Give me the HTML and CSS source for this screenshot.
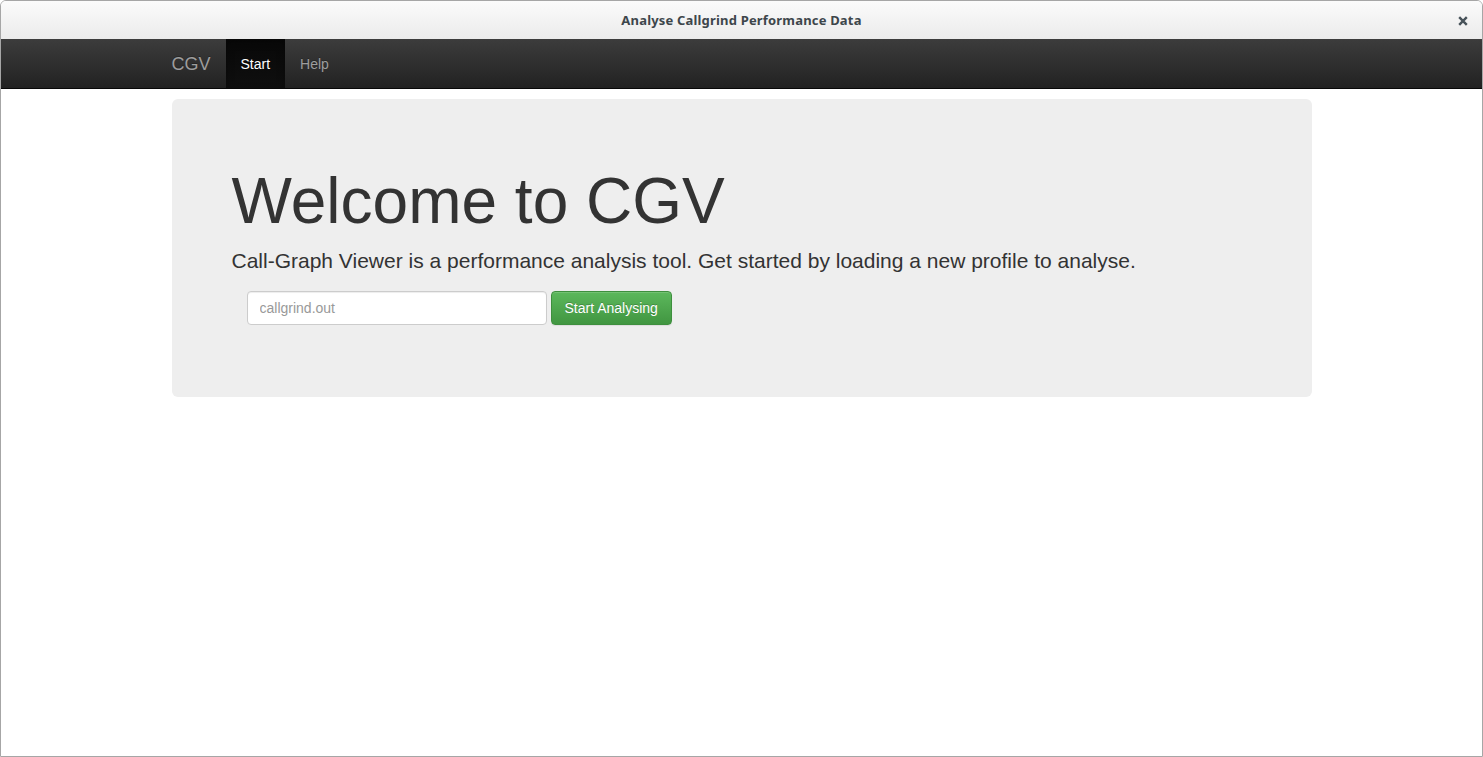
FILE: index.html
```html
<!DOCTYPE html>
<html>
<head>
<meta charset="utf-8">
<title>Analyse Callgrind Performance Data</title>
<link rel="stylesheet" href="styles.css">
</head>
<body>
<div class="window">
  <header class="titlebar">
    <span class="title">Analyse Callgrind Performance Data</span>
    <span class="close">
      <svg width="10" height="10" viewBox="0 0 10 10"><path d="M1.2 1.2 L8.8 8.8 M8.8 1.2 L1.2 8.8" stroke="#48535a" stroke-width="2.4" stroke-linecap="butt"/></svg>
    </span>
  </header>
  <nav class="navbar">
    <div class="container navwrap">
      <a class="brand">CGV</a>
      <ul class="navlinks">
        <li class="active"><a>Start</a></li>
        <li><a>Help</a></li>
      </ul>
    </div>
  </nav>
  <main class="container">
    <section class="jumbotron">
      <h1>Welcome to CGV</h1>
      <p>Call-Graph Viewer is a performance analysis tool. Get started by loading a new profile to analyse.</p>
      <form class="loadform">
        <input class="field" type="text" placeholder="callgrind.out">
        <button class="btn" type="button">Start Analysing</button>
      </form>
    </section>
  </main>
</div>
</body>
</html>
```

FILE: styles.css
```css
* { box-sizing: border-box; }
html, body { margin: 0; padding: 0; background: #fff; }
body {
  font-family: "Liberation Sans", Arial, sans-serif;
  font-size: 14px;
  line-height: 1.42857;
  color: #333;
}
.window {
  height: 757px;
  border: 1px solid #a6a6a6;
  border-radius: 6px 6px 0 0;
  overflow: hidden;
  background: #fff;
}
.titlebar {
  height: 38px;
  background: linear-gradient(to bottom, #fbfbfb 0%, #f3f3f3 50%, #ebebeb 100%);
  display: flex;
  align-items: center;
  justify-content: center;
  position: relative;
}
.title {
  font-family: "Noto Sans", "DejaVu Sans", sans-serif;
  font-weight: bold;
  font-size: 13px;
  letter-spacing: 0.18px;
  color: #3d464b;
}
.close {
  position: absolute;
  right: 14px;
  top: 15px;
  width: 10px;
  height: 10px;
  display: flex;
}
.navbar {
  height: 50px;
  background: linear-gradient(to bottom, #3c3c3c 0%, #222 100%);
  border-bottom: 1px solid #080808;
}
.container {
  width: 1170px;
  margin: 0 auto;
  padding: 0 15px;
}
.navwrap {
  display: flex;
  height: 49px;
}
.brand {
  margin-left: -15px;
  font-size: 18px;
  line-height: 20px;
  padding: 15px 15px;
  color: #9d9d9d;
  text-shadow: 0 -1px 0 rgba(0,0,0,.25);
}
.navlinks {
  list-style: none;
  margin: 0;
  padding: 0;
  display: flex;
}
.navlinks a {
  display: block;
  height: 49px;
  padding: 15px 15px;
  line-height: 20px;
  color: #9d9d9d;
  text-shadow: 0 -1px 0 rgba(0,0,0,.25);
}
.navlinks .active a {
  color: #fff;
  background: linear-gradient(to bottom, #080808 0%, #0f0f0f 100%);
  box-shadow: inset 0 3px 9px rgba(0,0,0,.25);
}
main.container { padding-top: 10px; }
.jumbotron {
  background: #eee;
  border-radius: 6px;
  padding: 48px 60px 72px;
}
.jumbotron h1 {
  margin: 20px 0 10px;
  font-size: 64px;
  font-weight: 500;
  line-height: 69px;
  color: #333;
}
.jumbotron p {
  margin: 0 0 15px;
  font-size: 21px;
  font-weight: 200;
  line-height: 30px;
}
.loadform {
  display: flex;
  gap: 4px;
  padding-left: 15px;
}
.field {
  width: 300px;
  height: 34px;
  padding: 6px 12px;
  font-family: inherit;
  font-size: 14px;
  color: #555;
  background: #fff;
  border: 1px solid #ccc;
  border-radius: 4px;
  box-shadow: inset 0 1px 1px rgba(0,0,0,.075);
}
.field::placeholder { color: #999; }
.btn {
  height: 34px;
  padding: 0 13px;
  font-family: inherit;
  font-size: 14px;
  line-height: 20px;
  color: #fff;
  border: 1px solid #3e8f3e;
  border-radius: 4px;
  background: linear-gradient(to bottom, #5cb85c 0%, #419641 100%);
  text-shadow: 0 -1px 0 rgba(0,0,0,.2);
  box-shadow: inset 0 1px 0 rgba(255,255,255,.15), 0 1px 1px rgba(0,0,0,.075);
}
```
